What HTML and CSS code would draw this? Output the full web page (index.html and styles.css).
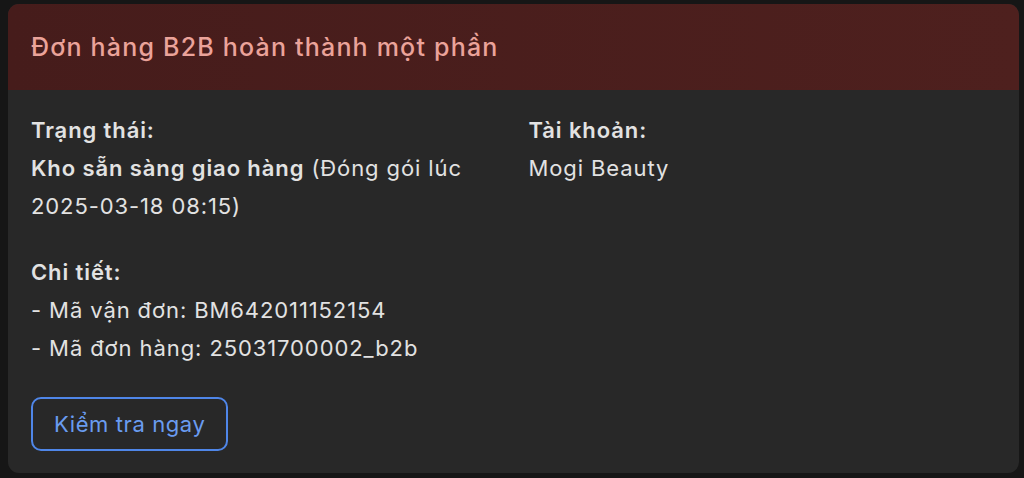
FILE: index.html
```html
<!DOCTYPE html>
<html lang="vi">
<head>
    <meta charset="UTF-8">
    <meta name="viewport" content="width=device-width, initial-scale=1.0">
    <title>Đơn hàng B2B</title>
    <link rel="stylesheet" href="styles.css">
</head>
<body>
    <div class="card">
        <!-- Tiêu đề -->
        <div class="card-header">
            <h2 class="card-title">Đơn hàng B2B hoàn thành một phần</h2>
        </div>

        <div class="card-body">
            <div class="info-grid">
                <div class="info-col">
                    <div class="label">Trạng thái:</div>
                    <div class="value"><strong>Kho sẵn sàng giao hàng</strong> (Đóng gói lúc <span class="nowrap">2025-03-18 08:15)</span></div>
                </div>
                <div class="info-col">
                    <div class="label">Tài khoản:</div>
                    <div class="value">Mogi Beauty</div>
                </div>
            </div>

            <!-- Chi tiết -->
            <div class="details">
                <div class="label">Chi tiết:</div>
                <div class="value">- Mã vận đơn: BM642011152154</div>
                <div class="value">- Mã đơn hàng: 25031700002_b2b</div>
            </div>

            <button class="btn-outline" type="button">Kiểm tra ngay</button>
        </div>
    </div>
</body>
</html>
```

FILE: styles.css
```css
html, body {
    background: #161616;
}

body {
    margin: 0;
    padding: 4px 5px 5px 8px;
    font-family: Inter, "Noto Sans", sans-serif;
}

.card {
    background: #282828;
    border-radius: 11px;
    overflow: hidden;
    height: 469px;
    box-sizing: border-box;
}

.card-header {
    height: 86px;
    padding: 0 23px;
    display: flex;
    align-items: center;
    background: linear-gradient(90deg, #461c1b 0%, #4e201e 100%);
}

.card-title {
    margin: 0;
    font-size: 25px;
    font-weight: 500;
    letter-spacing: 1.2px;
    color: #eba39a;
}

.card-body {
    padding: 21px 23px 22px;
    color: #e2e2e2;
    font-size: 22px;
    letter-spacing: 0.9px;
    line-height: 38px;
}

.info-grid {
    display: grid;
    grid-template-columns: 1fr 1fr;
    column-gap: 30px;
}

.label {
    font-weight: 600;
}

.value strong {
    font-weight: 600;
}

.nowrap {
    white-space: nowrap;
}

.details {
    margin-top: 28px;
}

.btn-outline {
    margin-top: 30px;
    height: 54px;
    padding: 0 21px;
    background: transparent;
    border: 2px solid #4f86e8;
    border-radius: 10px;
    color: #6a9cf0;
    font-family: inherit;
    font-size: 22px;
    letter-spacing: 0.6px;
}
```
